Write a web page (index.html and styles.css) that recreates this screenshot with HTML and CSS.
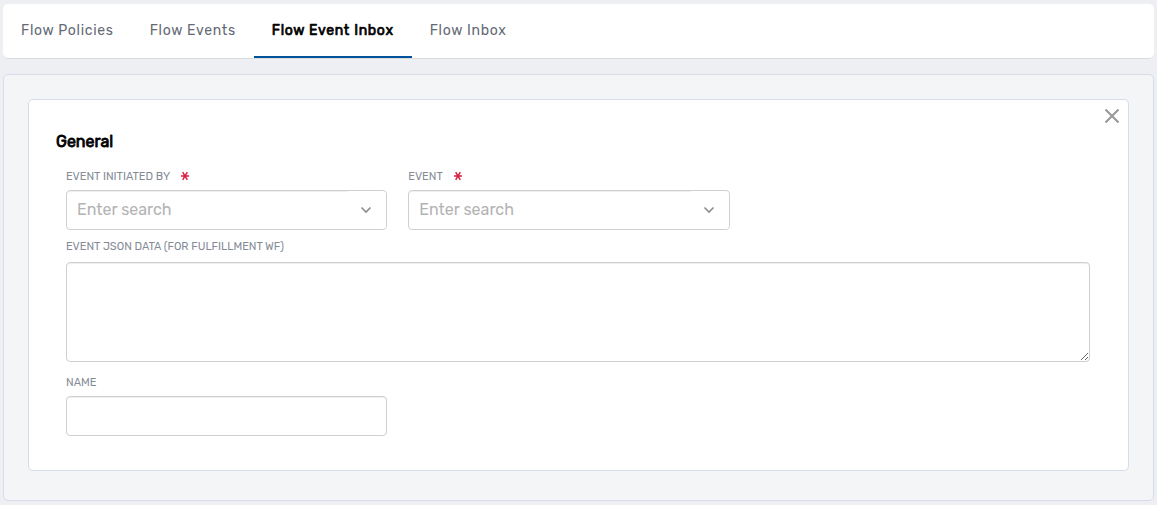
FILE: index.html
```
<!DOCTYPE html>
<html lang="en">
<head>
  <meta charset="UTF-8" />
  <meta name="viewport" content="width=device-width, initial-scale=1.0"/>
  <title>Flow Event Inbox</title>
  <link rel="stylesheet" href="styles.css">
</head>
<body>

  <nav class="tabs">
    <a href="#policies" class="tab">Flow Policies</a>
    <a href="#events" class="tab">Flow Events</a>
    <a href="#event-inbox" class="tab active" aria-current="page">Flow Event Inbox</a>
    <a href="#inbox" class="tab">Flow Inbox</a>
  </nav>

  <main class="panel">
    <form class="card">
      <button type="button" class="close" aria-label="Close">
        <svg width="16" height="16" viewBox="0 0 16 16" fill="none" stroke="#969696" stroke-width="2">
          <path d="M1.5 1.5l13 13M14.5 1.5l-13 13"/>
        </svg>
      </button>

      <h2>General</h2>

      <div class="row">
        <div class="field">
          <label for="initiated-by">EVENT INITIATED BY
            <svg class="required" width="10" height="12" viewBox="0 0 10 12" stroke="#d9213f" stroke-width="1.5">
              <path d="M1 5h8M2.700 1.200l4.600 7.600M7.300 1.200L2.700 8.800"/>
            </svg>
          </label>
          <div class="search">
            <input type="text" id="initiated-by" placeholder="Enter search" required>
            <button type="button" class="toggle" aria-label="Show options">
              <svg width="12" height="8" viewBox="0 0 12 8" fill="none" stroke="#8c8c8c" stroke-width="1.6">
                <path d="M1.5 1.5L6 6l4.500-4.500"/>
              </svg>
            </button>
          </div>
        </div>
        <div class="field">
          <label for="event">EVENT
            <svg class="required" width="10" height="12" viewBox="0 0 10 12" stroke="#d9213f" stroke-width="1.5">
              <path d="M1 5h8M2.700 1.200l4.600 7.600M7.300 1.200L2.700 8.800"/>
            </svg>
          </label>
          <div class="search">
            <input type="text" id="event" placeholder="Enter search" required>
            <button type="button" class="toggle" aria-label="Show options">
              <svg width="12" height="8" viewBox="0 0 12 8" fill="none" stroke="#8c8c8c" stroke-width="1.6">
                <path d="M1.5 1.5L6 6l4.500-4.500"/>
              </svg>
            </button>
          </div>
        </div>
      </div>

      <div class="field json">
        <label for="json-data">EVENT JSON DATA (FOR FULFILLMENT WF)</label>
        <textarea id="json-data"></textarea>
      </div>

      <div class="row">
        <div class="field">
          <label for="name">NAME</label>
          <input type="text" id="name">
        </div>
      </div>
    </form>
  </main>

</body>
</html>
```
FILE: styles.css
```
* {
  box-sizing: border-box;
}
body {
  margin: 0;
  padding: 4px 3px;
  font-family: Rubik, Roboto, sans-serif;
  background: #eeeff3;
}
.tabs {
  display: flex;
  height: 55px;
  background: #fff;
  border-bottom: 1px solid #d9dbe1;
  border-radius: 5px;
}
.tab {
  padding: 2px 18px 0;
  line-height: 50px;
  font-size: 14px;
  letter-spacing: 0.05em;
  color: #636a75;
  text-decoration: none;
  border-bottom: 2px solid transparent;
}
.tab.active {
  color: #000;
  -webkit-text-stroke: 0.05em #000;
  border-bottom-color: #00539b;
}
.panel {
  margin-top: 15px;
  padding: 24px;
  background: #f3f5f7;
  border: 1px solid #d8dbea;
  border-radius: 5px;
}
.card {
  position: relative;
  margin-bottom: 5px;
  padding: 32px 38px 34px 37px;
  background: #fff;
  border: 1px solid #d8dbea;
  border-radius: 5px;
}
.close {
  position: absolute;
  top: 8px;
  right: 8px;
  display: flex;
  padding: 0;
  border: none;
  background: none;
  cursor: pointer;
}
h2 {
  margin: 0 0 15px -10px;
  font-size: 16px;
  line-height: 20px;
  font-weight: 400;
  -webkit-text-stroke: 0.05em #000;
}
.row {
  display: grid;
  grid-template-columns: repeat(3, 1fr);
  gap: 21px;
  margin-right: 18px;
}
label {
  display: flex;
  align-items: center;
  gap: 10px;
  margin-bottom: 3px;
  font-size: 11px;
  line-height: 20px;
  color: #858b96;
}
input, textarea {
  display: block;
  width: 100%;
  height: 40px;
  padding: 0 10px 2px;
  font-family: inherit;
  font-size: 16px;
  color: #333;
  background: #fff;
  border: 1px solid #d0d0d0;
  border-radius: 4px;
  box-shadow: inset 0 1px 1px rgba(0,0,0,0.07);
}
input::placeholder {
  color: #b3b3b3;
}
textarea {
  height: 100px;
  resize: vertical;
}
.search {
  position: relative;
}
.toggle {
  position: absolute;
  top: 1px;
  right: 1px;
  display: flex;
  align-items: center;
  justify-content: center;
  width: 40px;
  height: 38px;
  padding: 0;
  border: none;
  border-radius: 4px;
  background: #fff;
  cursor: pointer;
}
.json {
  margin: 7px 0 11px;
}
.json label {
  margin-bottom: 5px;
}
```
